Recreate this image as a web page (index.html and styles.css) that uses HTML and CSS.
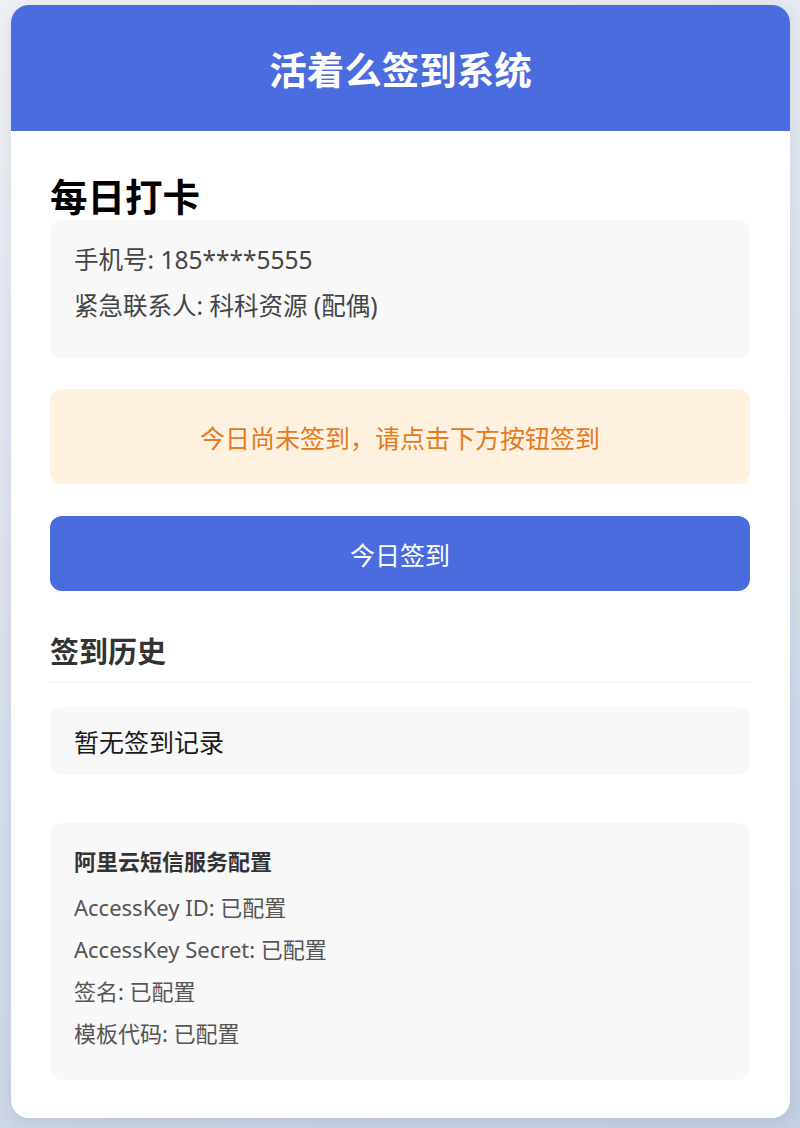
FILE: index.html
```html
<!DOCTYPE html>
<html lang="zh-CN">
<head>
<meta charset="utf-8">
<title>活着么签到系统</title>
<link rel="stylesheet" href="styles.css">
</head>
<body>
<div class="container">
  <header class="header">
    <h1 class="title">活着么签到系统</h1>
  </header>
  <main class="content">
    <h2 class="section-title">每日打卡</h2>
    <div class="info-box">
      <p class="info-line">手机号: 185****5555</p>
      <p class="info-line">紧急联系人: 科科资源 (配偶)</p>
    </div>
    <div class="notice">今日尚未签到，请点击下方按钮签到</div>
    <button class="checkin-btn" type="button">今日签到</button>
    <h3 class="history-title">签到历史</h3>
    <div class="history-empty">暂无签到记录</div>
    <div class="config-box">
      <h4 class="config-title">阿里云短信服务配置</h4>
      <p class="config-line">AccessKey ID: 已配置</p>
      <p class="config-line">AccessKey Secret: 已配置</p>
      <p class="config-line">签名: 已配置</p>
      <p class="config-line">模板代码: 已配置</p>
    </div>
  </main>
</div>
</body>
</html>
```

FILE: styles.css
```css
* {
  box-sizing: border-box;
}

html, body {
  margin: 0;
}

body {
  min-height: 1128px;
  padding: 5px 10px 5px 11px;
  background: linear-gradient(160deg, #eef0f5 0%, #c3cfe2 100%);
  font-family: "Noto Sans", "Noto Sans CJK SC", sans-serif;
  color: #333;
}

.container {
  width: 779px;
  background: #fff;
  border-radius: 18px;
  overflow: hidden;
  box-shadow: 0 4px 14px rgba(60, 80, 120, 0.12);
}

.header {
  height: 126px;
  background: #4a6cdf;
  display: flex;
  align-items: center;
  justify-content: center;
}

.title {
  margin: 0;
  color: #fff;
  font-size: 37.5px;
  font-weight: 700;
  line-height: 44px;
  padding-top: 4px;
}

.content {
  padding: 44px 40px 38px 39px;
  display: flex;
  flex-direction: column;
}

.section-title {
  margin: 0 0 1px;
  font-size: 37.5px;
  font-weight: 700;
  line-height: 44px;
  color: #000;
}

.info-box {
  background: #f8f8f9;
  border-radius: 12px;
  padding: 22px 24px 14px;
}

.info-line {
  margin: 0 0 10px;
  font-size: 24.5px;
  line-height: 36px;
  color: #444;
}

.info-box .info-line:last-child {
  margin-bottom: 20px;
}

.notice {
  margin-top: 31px;
  height: 95px;
  background: #fff1e0;
  border-radius: 12px;
  display: flex;
  align-items: center;
  justify-content: center;
  color: #e67a1e;
  font-size: 25px;
}

.checkin-btn {
  margin-top: 32px;
  height: 75px;
  border: none;
  border-radius: 12px;
  background: #4a6cdf;
  color: #fff;
  font-family: inherit;
  font-size: 25px;
  padding: 0;
}

.history-title {
  margin: 41px 0 0;
  padding-bottom: 10px;
  border-bottom: 1px solid #eeeeee;
  font-size: 29px;
  font-weight: 700;
  line-height: 40px;
  color: #333;
}

.history-empty {
  margin-top: 24px;
  height: 68px;
  display: flex;
  align-items: center;
  padding: 0 24px;
  background: #f8f8f9;
  border-radius: 12px;
  font-size: 25px;
  color: #1a1a1a;
}

.config-box {
  margin-top: 48px;
  background: #f8f8f9;
  border-radius: 12px;
  padding: 23px 24px 21px;
}

.config-title {
  margin: 0 0 15px;
  font-size: 22px;
  font-weight: 700;
  line-height: 30px;
  color: #333;
}

.config-line {
  margin: 0 0 10px;
  font-size: 22px;
  line-height: 32px;
  color: #555;
}
```
